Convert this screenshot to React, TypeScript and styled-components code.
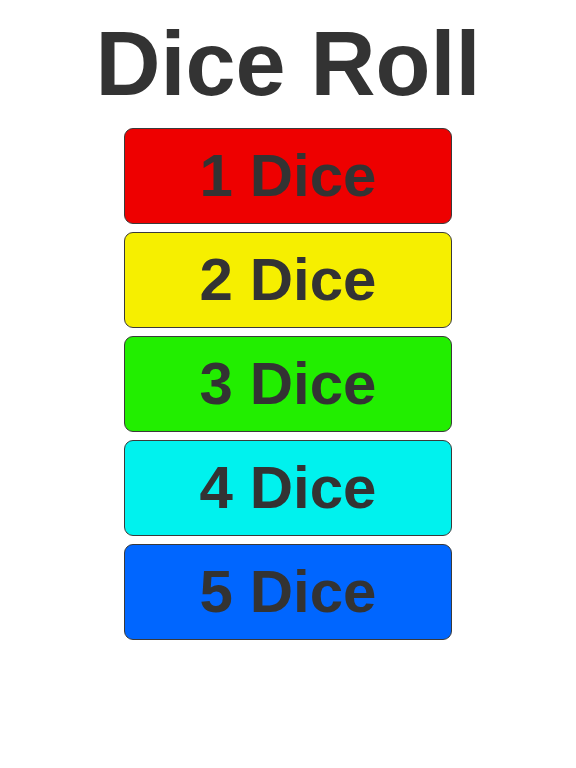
import React from "react";
import styled, { createGlobalStyle } from "styled-components";

const GlobalStyle = createGlobalStyle`
  html, body {
    margin: 0;
    padding: 0;
    background: #ffffff;
  }
  body {
    font-family: "Liberation Sans", Arial, sans-serif;
  }
`;

const Page = styled.main`
  display: flex;
  flex-direction: column;
  align-items: center;
  padding-top: 19px;
`;

const Title = styled.h1`
  margin: 0 0 19px;
  font-size: 90px;
  line-height: 90px;
  font-weight: 700;
  color: #333333;
`;

const DiceList = styled.div`
  display: flex;
  flex-direction: column;
  gap: 8px;
`;

const DiceButton = styled.button<{ $bg: string }>`
  box-sizing: border-box;
  width: 328px;
  height: 96px;
  display: flex;
  align-items: center;
  justify-content: center;
  border: 1px solid #3a3a3a;
  border-radius: 9px;
  background: ${(p) => p.$bg};
  font-family: "Liberation Sans", Arial, sans-serif;
  font-size: 60px;
  line-height: 60px;
  font-weight: 700;
  color: #333333;
  padding: 0;
  cursor: pointer;
`;

const options = [
  { count: 1, color: "#ee0000" },
  { count: 2, color: "#f6ef00" },
  { count: 3, color: "#22ee00" },
  { count: 4, color: "#00f2ee" },
  { count: 5, color: "#0066ff" },
];

export default function App() {
  return (
    <>
      <GlobalStyle />
      <Page>
        <Title>Dice Roll</Title>
        <DiceList>
          {options.map((o) => (
            <DiceButton key={o.count} $bg={o.color}>
              {o.count} Dice
            </DiceButton>
          ))}
        </DiceList>
      </Page>
    </>
  );
}
